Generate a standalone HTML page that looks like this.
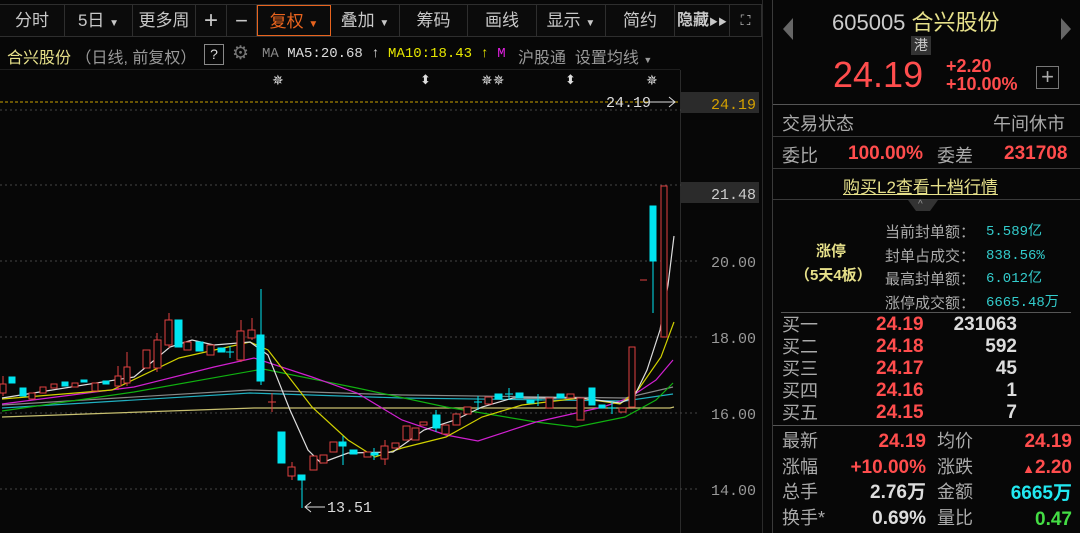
<!DOCTYPE html><html><head><meta charset="utf-8"><style>
*{margin:0;padding:0;box-sizing:border-box}
body{width:1080px;height:533px;background:#070707;overflow:hidden;position:relative;font-family:"Liberation Sans","Noto Sans CJK SC",sans-serif;color:#bbb}
.a{position:absolute;white-space:nowrap}
.btn{position:absolute;top:5px;height:31px;border-right:1px solid #2e2e2e;color:#c8c8c8;font-size:17px;text-align:center;line-height:31px;background:#0b0b0b;white-space:nowrap;overflow:hidden}
.mono{font-family:"Liberation Mono","Noto Sans CJK SC",monospace}
.r{color:#ff4d4d}
.hl{position:absolute;left:773px;width:307px;height:1px;background:#3a3a3a}
.lab{color:#aaa;font-size:18px}
.num{font-weight:bold;font-size:19px}
</style></head><body>
<div class="a" style="left:0;top:4px;width:762px;height:33px;border-top:1px solid #2e2e2e;border-bottom:1px solid #2e2e2e;background:#0b0b0b"></div>
<div class="btn" style="left:0;width:65px">分时</div>
<div class="btn" style="left:65px;width:68px">5日 <span style="font-size:10px">▼</span></div>
<div class="btn" style="left:133px;width:63px">更多周</div>
<div class="btn" style="left:196px;width:31px;font-size:24px">+</div>
<div class="btn" style="left:227px;width:30px;font-size:22px">−</div>
<div class="btn" style="left:257px;width:74px;color:#e8641e;border:1px solid #e8641e">复权 <span style="font-size:10px">▼</span></div>
<div class="btn" style="left:331px;width:69px">叠加 <span style="font-size:10px">▼</span></div>
<div class="btn" style="left:400px;width:68px">筹码</div>
<div class="btn" style="left:468px;width:69px">画线</div>
<div class="btn" style="left:537px;width:69px">显示 <span style="font-size:10px">▼</span></div>
<div class="btn" style="left:606px;width:69px">简约</div>
<div class="btn" style="left:675px;width:55px;font-weight:bold;font-size:16px">隐藏<span style="font-size:9px">▶▶</span></div>
<div class="btn" style="left:730px;width:32px;font-size:14px">⛶</div>
<div class="a" style="left:7px;top:44px;font-size:16px"><span style="color:#e6e08a">合兴股份</span> <span style="color:#999">（日线, 前复权）</span></div>
<div class="a" style="left:204px;top:44px;width:20px;height:21px;border:1px solid #888;color:#ddd;font-size:14px;text-align:center;line-height:19px">?</div>
<div class="a" style="left:232px;top:42px;color:#777;font-size:19px">⚙</div>
<div class="a mono" style="left:262px;top:46px;font-size:14px;color:#888">MA <span style="color:#ddd">MA5:20.68 ↑</span> <span style="color:#e6e600">MA10:18.43 ↑</span> <span style="color:#e020e0">M</span></div>
<div class="a" style="left:518px;top:44px;font-size:16px;color:#999">沪股通 &nbsp;设置均线 <span style="font-size:9px">▼</span></div>
<div class="a" style="left:0;top:69px;width:680px;height:1px;background:#1e1e1e"></div>
<div class="a" style="left:272px;top:72px;color:#ddd;font-size:14px">✵</div>
<div class="a" style="left:420px;top:72px;color:#ddd;font-size:13px">⬍</div>
<div class="a" style="left:481px;top:72px;color:#ddd;font-size:14px">✵✵</div>
<div class="a" style="left:565px;top:72px;color:#ddd;font-size:13px">⬍</div>
<div class="a" style="left:646px;top:72px;color:#ddd;font-size:14px">✵</div>
<div class="a" style="left:680px;top:70px;width:1px;height:463px;background:#2a2a2a"></div>
<div class="a" style="left:762px;top:0;width:1px;height:533px;background:#2a2a2a"></div>
<div class="a" style="left:772px;top:0;width:1px;height:533px;background:#3a3a3a"></div>
<svg class="a" style="left:0;top:0" width="770" height="533">
<g stroke="#444" stroke-dasharray="2,3" stroke-width="1">
<line x1="0" y1="110" x2="700" y2="110"/><line x1="0" y1="185" x2="700" y2="185"/><line x1="0" y1="261" x2="700" y2="261"/><line x1="0" y1="337" x2="700" y2="337"/><line x1="0" y1="413" x2="700" y2="413"/><line x1="0" y1="489" x2="700" y2="489"/></g>
<line x1="0" y1="102" x2="680" y2="102" stroke="#c8a000" stroke-dasharray="3,2"/>
<g font-family="Liberation Mono,monospace" font-size="15" fill="#999">
<text x="711" y="267">20.00</text><text x="711" y="343">18.00</text><text x="711" y="419">16.00</text><text x="711" y="495">14.00</text></g>
<rect x="681" y="92" width="78" height="21" fill="#2b2b2b"/><text x="711" y="109" font-family="Liberation Mono,monospace" font-size="15" fill="#d4a000">24.19</text>
<rect x="681" y="182" width="78" height="21" fill="#2b2b2b"/><text x="711" y="199" font-family="Liberation Mono,monospace" font-size="15" fill="#ccc">21.48</text>
<text x="606" y="107" font-family="Liberation Mono,monospace" font-size="15" fill="#ddd">24.19</text>
<path d="M650 102h25M669 97l6 5-6 5" stroke="#ddd" fill="none"/>
<text x="327" y="512" font-family="Liberation Mono,monospace" font-size="15" fill="#ddd">13.51</text>
<path d="M305 507h20M311 502l-6 5 6 5" stroke="#ddd" fill="none"/>
<g fill="none" stroke-width="1.2">
<polyline stroke="#c8c070" points="2,417 254,408 670,408 674,407"/>
<polyline stroke="#888" points="2,405 250,390 402,395 625,398 673,387"/>
<polyline stroke="#20b0c0" points="2,408 250,393 402,398 625,401 673,394"/>
<polyline stroke="#10b010" points="2,411 134,392 263,369 357,388 446,407 536,422 576,427 625,417 656,400 673,383"/>
<polyline stroke="#d020d0" points="2,404 134,387 214,367 254,358 312,377 357,393 402,420 446,435 478,441 536,422 603,407 629,398 656,380 673,360"/>
<polyline stroke="#d0d000" points="2,399 112,390 179,358 250,342 268,350 312,407 348,440 375,457 402,448 446,437 482,417 522,405 580,398 620,404 638,390 661,357 674,322"/>
<polyline stroke="#ddd" points="2,398 134,377 170,347 192,340 214,345 250,342 268,355 290,410 308,450 321,463 348,453 393,452 424,430 455,420 482,407 513,398 580,398 620,403 634,397 647,370 660,330 668,285 674,236"/>
</g>
<g stroke-width="1">
<g stroke="#e04040" fill="#070707">
<line x1="3" y1="376" x2="3" y2="396"/><rect x="0" y="384" width="6" height="9"/>
<rect x="29" y="393" width="6" height="6"/><rect x="40" y="387" width="6" height="6"/><rect x="51" y="384" width="6" height="4"/><rect x="72" y="383" width="6" height="4"/><rect x="92" y="383" width="6" height="8"/>
<line x1="118" y1="366" x2="118" y2="390"/><rect x="115" y="376" width="6" height="10"/>
<line x1="127" y1="352" x2="127" y2="386"/><rect x="124" y="367" width="6" height="16"/>
<rect x="143" y="350" width="7" height="18"/><line x1="157" y1="333" x2="157" y2="372"/><rect x="154" y="340" width="7" height="28"/>
<line x1="169" y1="313" x2="169" y2="348"/><rect x="165" y="320" width="7" height="25"/>
<rect x="184" y="342" width="7" height="8"/><rect x="207" y="345" width="7" height="10"/>
<line x1="241" y1="320" x2="241" y2="362"/><rect x="237" y="331" width="7" height="29"/>
<line x1="252" y1="318" x2="252" y2="340"/><rect x="248" y="330" width="7" height="8"/>
<line x1="272" y1="393" x2="272" y2="412"/><line x1="268" y1="402" x2="276" y2="402"/>
<line x1="292" y1="462" x2="292" y2="480"/><rect x="288" y="467" width="7" height="9"/>
<rect x="310" y="456" width="7" height="14"/><rect x="320" y="455" width="7" height="8"/><rect x="330" y="442" width="7" height="10"/>
<rect x="364" y="452" width="7" height="5"/><line x1="385" y1="440" x2="385" y2="465"/><rect x="381" y="446" width="7" height="13"/><rect x="392" y="443" width="7" height="5"/>
<rect x="403" y="426" width="7" height="14"/><rect x="412" y="428" width="7" height="12"/><rect x="420" y="422" width="7" height="3"/>
<rect x="442" y="425" width="7" height="9"/><rect x="453" y="414" width="7" height="11"/><rect x="464" y="407" width="7" height="7"/>
<rect x="485" y="397" width="7" height="7"/><rect x="546" y="398" width="7" height="10"/><rect x="567" y="394" width="7" height="4"/>
<rect x="577" y="398" width="7" height="22"/><rect x="619" y="408" width="7" height="4"/>
<rect x="629" y="347" width="6" height="60"/>
<line x1="640" y1="280" x2="647" y2="280"/>
<rect x="661" y="186" width="6" height="151"/>
</g>
<g stroke="#00e5f0" fill="#00e5f0">
<rect x="9" y="377" width="6" height="6"/><rect x="20" y="388" width="6" height="8"/><rect x="62" y="382" width="6" height="4"/><rect x="81" y="380" width="6" height="2"/><rect x="103" y="381" width="6" height="3"/>
<rect x="175" y="320" width="7" height="27"/><rect x="196" y="342" width="7" height="9"/><rect x="218" y="348" width="7" height="4"/>
<line x1="230" y1="346" x2="230" y2="358"/><line x1="226" y1="352" x2="234" y2="352"/>
<line x1="261" y1="289" x2="261" y2="385"/><rect x="257" y="335" width="7" height="46"/>
<rect x="278" y="432" width="7" height="31"/>
<line x1="302" y1="475" x2="302" y2="508"/><rect x="298" y="475" width="7" height="5"/>
<line x1="343" y1="436" x2="343" y2="465"/><rect x="339" y="442" width="7" height="4"/><rect x="350" y="450" width="7" height="4"/>
<line x1="374" y1="448" x2="374" y2="460"/><rect x="371" y="453" width="7" height="2"/>
<line x1="436" y1="410" x2="436" y2="432"/><rect x="433" y="415" width="7" height="13"/>
<line x1="478" y1="396" x2="478" y2="410"/><line x1="474" y1="402" x2="482" y2="402"/>
<rect x="495" y="394" width="7" height="5"/><line x1="509" y1="388" x2="509" y2="400"/><line x1="505" y1="394" x2="513" y2="394"/>
<rect x="516" y="393" width="7" height="5"/><rect x="527" y="400" width="7" height="3"/><line x1="538" y1="394" x2="538" y2="406"/><line x1="534" y1="400" x2="542" y2="400"/>
<rect x="557" y="394" width="7" height="4"/><rect x="589" y="388" width="6" height="17"/><rect x="599" y="405" width="6" height="3"/><line x1="612" y1="402" x2="612" y2="414"/><line x1="608" y1="408" x2="616" y2="408"/>
<line x1="653" y1="206" x2="653" y2="313"/><rect x="650" y="206" width="6" height="55"/>
</g></g>
</svg>
<div class="a" style="left:783px;top:18px;border-right:10px solid #666;border-top:11px solid transparent;border-bottom:11px solid transparent;width:0;height:0"></div>
<div class="a" style="left:1061px;top:18px;border-left:10px solid #666;border-top:11px solid transparent;border-bottom:11px solid transparent;width:0;height:0"></div>
<div class="a" style="left:832px;top:5px;font-size:22px;color:#ccc">605005 <span style="color:#e6e08a">合兴股份</span></div>
<div class="a" style="left:911px;top:36px;width:20px;height:19px;background:#333;color:#ccc;font-size:14px;text-align:center;line-height:19px">港</div>
<div class="a r" style="left:833px;top:54px;font-size:36px">24.19</div>
<div class="a r" style="left:946px;top:57px;font-size:18px;font-weight:bold;line-height:18px">+2.20<br>+10.00%</div>
<div class="a" style="left:1036px;top:66px;width:23px;height:23px;border:1px solid #777;color:#aaa;text-align:center;line-height:20px;font-size:22px">+</div>
<div class="hl" style="top:104px;background:#555"></div>
<div class="a lab" style="left:782px;top:110px">交易状态</div><div class="a lab" style="left:993px;top:110px">午间休市</div>
<div class="hl" style="top:136px"></div>
<div class="a lab" style="left:782px;top:142px">委比</div><div class="a r num" style="left:848px;top:143px">100.00%</div>
<div class="a lab" style="left:937px;top:142px">委差</div><div class="a r num" style="left:1004px;top:143px">231708</div>
<div class="hl" style="top:168px"></div>
<div class="a" style="left:843px;top:173px;font-size:17px;color:#e6e08a;text-decoration:underline">购买L2查看十档行情</div>
<div class="hl" style="top:199px"></div>
<div class="a" style="left:908px;top:200px;border-left:8px solid transparent;border-right:8px solid transparent;border-top:11px solid #333;width:30px;height:0"></div>
<div class="a" style="left:918px;top:199px;color:#999;font-size:10px">^</div>
<div class="a" style="left:816px;top:240px;color:#e6e08a;font-size:15px;font-weight:bold">涨停</div>
<div class="a" style="left:795px;top:264px;color:#e6e08a;font-size:15px;font-weight:bold">（5天4板）</div>
<div class="a" style="left:885px;top:221px;font-size:15px;color:#aaa;line-height:23.5px">当前封单额：<br>封单占成交：<br>最高封单额：<br>涨停成交额：</div>
<div class="a mono" style="left:986px;top:221px;font-size:14px;color:#3cc;line-height:23.5px">5.589亿<br>838.56%<br>6.012亿<br>6665.48万</div>
<div class="a" style="left:781px;top:312px;width:290px;height:1px;background:#555"></div>
<div class="a lab" style="left:782px;top:314px;line-height:22px">买一<br>买二<br>买三<br>买四<br>买五</div>
<div class="a r num" style="left:876px;top:314px;line-height:22px">24.19<br>24.18<br>24.17<br>24.16<br>24.15</div>
<div class="a num" style="left:920px;top:314px;width:97px;text-align:right;line-height:22px;color:#ddd">231063<br>592<br>45<br>1<br>7</div>
<div class="hl" style="top:425px;background:#555"></div>
<div class="a lab" style="left:782px;top:429px;line-height:25.5px">最新<br>涨幅<br>总手<br>换手*</div>
<div class="a num" style="left:820px;top:429px;width:106px;text-align:right;line-height:25.5px"><span class="r">24.19</span><br><span class="r">+10.00%</span><br><span style="color:#ddd">2.76万</span><br><span style="color:#ddd">0.69%</span></div>
<div class="a lab" style="left:937px;top:429px;line-height:25.5px">均价<br>涨跌<br>金额<br>量比</div>
<div class="a num" style="left:980px;top:429px;width:92px;text-align:right;line-height:25.5px"><span class="r">24.19</span><br><span class="r"><span style="font-size:13px">▲</span>2.20</span><br><span style="color:#22e8f0">6665万</span><br><span style="color:#44dd44">0.47</span></div>
</body></html>
